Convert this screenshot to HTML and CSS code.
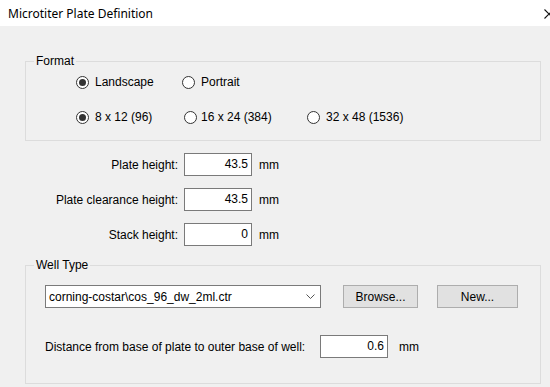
FILE: index.html
```html
<!DOCTYPE html>
<html lang="en">
<head>
    <meta charset="UTF-8">
    <title>Microtiter Plate Definition</title>
    <link rel="stylesheet" href="styles.css">
</head>
<body>
    <div class="titlebar">
        <span class="title">Microtiter Plate Definition</span>
        <span class="close">
            <svg width="10" height="10" viewBox="0 0 10 10"><path d="M0.5 0.5 L9.5 9.5 M9.5 0.5 L0.5 9.5" stroke="#111" stroke-width="1.1" fill="none"/></svg>
        </span>
    </div>

    <div class="dialog">
        <fieldset class="group">
            <legend>Format</legend>
            <div class="format-body">
                <div class="radio-row">
                    <label class="radio w-land"><span class="dot checked"></span>Landscape</label>
                    <label class="radio"><span class="dot"></span>Portrait</label>
                </div>
                <div class="radio-row second">
                    <label class="radio w-96"><span class="dot checked"></span>8 x 12 (96)</label>
                    <label class="radio w-384"><span class="dot"></span>16 x 24 (384)</label>
                    <label class="radio"><span class="dot"></span>32 x 48 (1536)</label>
                </div>
            </div>
        </fieldset>

        <div class="heights">
            <span class="lbl">Plate height:</span>
            <span class="field">43.5</span>
            <span class="unit">mm</span>

            <span class="lbl">Plate clearance height:</span>
            <span class="field">43.5</span>
            <span class="unit">mm</span>

            <span class="lbl">Stack height:</span>
            <span class="field">0</span>
            <span class="unit">mm</span>
        </div>

        <fieldset class="group">
            <legend>Well Type</legend>
            <div class="well-body">
                <div class="well-row">
                    <div class="combo">
                        <span>corning-costar\cos_96_dw_2ml.ctr</span>
                        <svg width="9" height="5" viewBox="0 0 9 5"><polyline points="0.5,0.5 4.5,4.5 8.5,0.5" stroke="#555" stroke-width="1" fill="none"/></svg>
                    </div>
                    <button class="btn browse">Browse...</button>
                    <button class="btn new">New...</button>
                </div>
                <div class="distance-row">
                    <span class="distance-lbl">Distance from base of plate to outer base of well:</span>
                    <span class="field">0.6</span>
                    <span class="unit wide">mm</span>
                </div>
            </div>
        </fieldset>
    </div>
</body>
</html>
```

FILE: styles.css
```css
body {
    margin: 0;
    width: 550px;
    height: 387px;
    overflow: hidden;
    background-color: #f0f0f0;
    font-family: "Liberation Sans", Arial, sans-serif;
    font-size: 12px;
    color: #000;
}
.titlebar {
    height: 26px;
    background: white;
    display: flex;
    align-items: center;
    justify-content: space-between;
    padding-left: 8px;
    overflow: hidden;
}
.title {
    font-family: "Noto Sans", sans-serif;
    font-size: 12px;
}
.close {
    display: flex;
    width: 6px;
    overflow: hidden;
    margin-top: 1px;
}
.close svg {
    flex: none;
}
.dialog {
    padding: 28px 9px 0 25px;
}
.group {
    margin: 0;
    padding: 0;
    border: 1px solid #dcdcdc;
    min-width: 0;
}
.group legend {
    margin-left: 8px;
    padding: 0 2px;
    line-height: 14px;
}
.format-body {
    padding: 4px 0 13px 50px;
}
.radio-row {
    display: flex;
    height: 20px;
    align-items: center;
}
.radio-row.second {
    margin-top: 15px;
}
.radio {
    display: flex;
    align-items: center;
    gap: 6px;
}
.w-land { width: 106px; }
.w-96 { width: 108px; }
.w-384 { width: 123px; gap: 4px; }
.dot {
    width: 11px;
    height: 11px;
    border: 1px solid #333;
    border-radius: 50%;
    background: white;
    display: flex;
    align-items: center;
    justify-content: center;
}
.dot.checked::after {
    content: "";
    width: 7px;
    height: 7px;
    border-radius: 50%;
    background: #333;
}
.heights {
    display: grid;
    grid-template-columns: 153px 68px auto;
    column-gap: 6px;
    row-gap: 12px;
    align-items: center;
    margin-top: 12px;
    margin-bottom: 12px;
}
.lbl {
    text-align: right;
}
.field {
    box-sizing: border-box;
    height: 23px;
    width: 68px;
    border: 1px solid #7a7a7a;
    background: white;
    text-align: right;
    padding-right: 3px;
    line-height: 20px;
}
.unit {
    padding-left: 1px;
}
.well-body {
    padding: 13px 0 25px 19px;
}
.well-row {
    display: flex;
    align-items: center;
}
.combo {
    box-sizing: border-box;
    width: 276px;
    height: 23px;
    border: 1px solid #7a7a7a;
    background: white;
    display: flex;
    align-items: center;
    justify-content: space-between;
    padding: 0 5px 0 3px;
}
.btn {
    box-sizing: border-box;
    height: 23px;
    background: #e1e1e1;
    border: 1px solid #adadad;
    font-family: inherit;
    font-size: 12px;
    color: #000;
    padding: 0;
}
.browse {
    width: 75px;
    margin-left: 22px;
}
.new {
    width: 81px;
    margin-left: 19px;
}
.distance-row {
    display: flex;
    align-items: center;
    margin-top: 27px;
}
.distance-lbl {
    width: 275px;
}
.unit.wide {
    padding-left: 11px;
}
```
